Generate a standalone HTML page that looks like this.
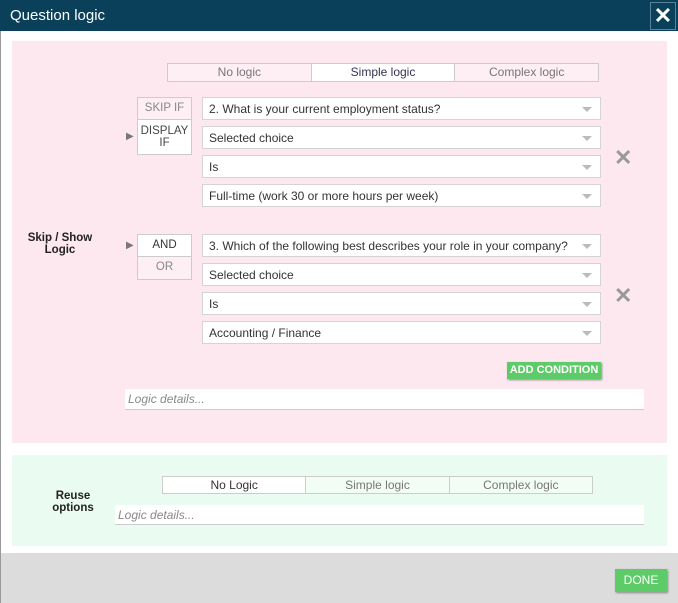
<!DOCTYPE html>
<html><head><style>
*{box-sizing:border-box;margin:0;padding:0}
body{width:678px;height:603px;position:relative;font-family:"Liberation Sans",sans-serif;font-size:12px;color:#333;background:#fff;overflow:hidden}
.a{position:absolute}
.hdr{left:0;top:0;width:678px;height:31px;background:#0b405a;color:#fff;font-size:15px;padding:7px 0 0 10px}
.cl{left:650px;top:2px;width:26px;height:28px;border:1px solid #5a8299;color:#fff;font-size:22px;font-weight:bold;text-align:center;line-height:26px}
.tabs{display:flex;border:1px solid #ccc}
.tabs div{flex:1;text-align:center;color:#777;border-left:1px solid #ccc;line-height:16px}
.tabs div:first-child{border-left:none}
.sel{left:202px;width:399px;height:23px;background:#fff;border:1px solid #d4d4d4;padding:4px 6px;color:#333}
.sel:after{content:"";position:absolute;right:8px;top:9px;border:5px solid transparent;border-top:5px solid #bbb;border-bottom:none}
.bx{left:137px;width:55px;border:1px solid #ccc;text-align:center;color:#888;font-size:11.5px}
.x{color:#999;font-size:22px;font-weight:bold}
.arr{color:#777;font-size:10px}
.ld{background:#fff;border-bottom:1px solid #ccc;color:#888;font-style:italic;padding:3px 3px}
.btn{background:#5dcc68;color:#fff;text-align:center;box-shadow:1px 1px 2px #888}
.lbl{font-weight:bold;color:#222;text-align:center;font-size:11.5px;line-height:12px}
</style></head><body>
<div class="a" style="left:0;top:0;width:1px;height:603px;background:#999"></div>
<div class="a hdr">Question logic</div>
<div class="a cl">✕</div>
<div class="a" style="left:12px;top:41px;width:655px;height:402px;background:#fde8f0"></div>
<div class="a" style="left:12px;top:455px;width:655px;height:91px;background:#eafcf1"></div>
<div class="a" style="left:1px;top:553px;width:677px;height:50px;background:#dcdcdc"></div>

<div class="a tabs" style="left:167px;top:63px;width:432px;height:19px"><div style="background:#fdeff4">No logic</div><div style="background:#fff;color:#335">Simple logic</div><div style="background:#fdeff4">Complex logic</div></div>

<div class="a bx" style="top:97px;height:23px;line-height:21px;background:#fdeff4">SKIP IF</div>
<div class="a bx" style="top:120px;height:35px;line-height:12px;padding-top:5px;background:#fff;color:#444;border-top:none">DISPLAY<br>IF</div>
<div class="a arr" style="left:126px;top:131px">▶</div>
<div class="a sel" style="top:97px">2. What is your current employment status?</div>
<div class="a sel" style="top:126px">Selected choice</div>
<div class="a sel" style="top:155px">Is</div>
<div class="a sel" style="top:184px">Full-time (work 30 or more hours per week)</div>
<div class="a x" style="left:614px;top:145px">✕</div>

<div class="a lbl" style="left:22px;top:232px;width:76px">Skip / Show<br>Logic</div>

<div class="a bx" style="top:234px;height:23px;line-height:21px;background:#fff;color:#333">AND</div>
<div class="a bx" style="top:257px;height:23px;line-height:21px;background:#fdeff4;border-top:none">OR</div>
<div class="a arr" style="left:126px;top:240px">▶</div>
<div class="a sel" style="top:234px">3. Which of the following best describes your role in your company?</div>
<div class="a sel" style="top:263px">Selected choice</div>
<div class="a sel" style="top:292px">Is</div>
<div class="a sel" style="top:321px">Accounting / Finance</div>
<div class="a x" style="left:614px;top:283px">✕</div>

<div class="a btn" style="left:507px;top:362px;width:94px;height:17px;line-height:17px;font-size:11px;font-weight:bold">ADD CONDITION</div>
<div class="a ld" style="left:125px;top:389px;width:519px;height:21px">Logic details...</div>

<div class="a lbl" style="left:40px;top:490px;width:66px">Reuse<br>options</div>
<div class="a tabs" style="left:162px;top:476px;width:431px;height:18px"><div style="background:#fff;color:#333">No Logic</div><div style="background:#f1fdf5">Simple logic</div><div style="background:#f1fdf5">Complex logic</div></div>
<div class="a ld" style="left:115px;top:505px;width:529px;height:20px">Logic details...</div>

<div class="a btn" style="left:615px;top:569px;width:52px;height:23px;line-height:23px;font-size:12px">DONE</div>
</body></html>
